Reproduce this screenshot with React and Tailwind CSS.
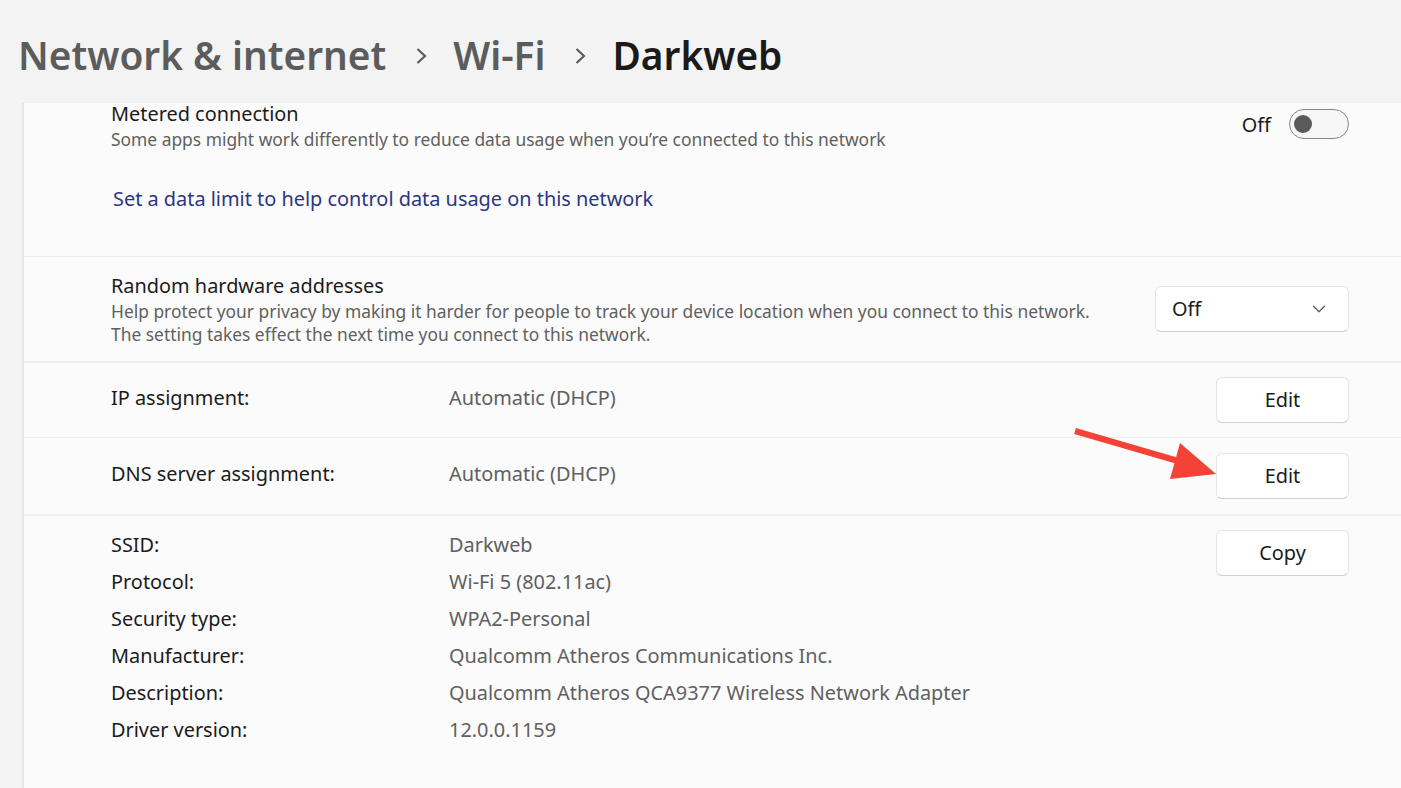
import { ChevronDown } from 'lucide-react';

const details = [
  ['SSID:', 'Darkweb'],
  ['Protocol:', 'Wi-Fi 5 (802.11ac)'],
  ['Security type:', 'WPA2-Personal'],
  ['Manufacturer:', 'Qualcomm Atheros Communications Inc.'],
  ['Description:', 'Qualcomm Atheros QCA9377 Wireless Network Adapter'],
  ['Driver version:', '12.0.0.1159'],
];

function Btn({ children }) {
  return (
    <button className="w-[133px] h-[46px] rounded-[6px] bg-white border border-[#e5e5e5] border-b-[#cfcfcf] text-[19.9px] text-[#1b1b1b] flex items-center justify-center">
      {children}
    </button>
  );
}

function Crumb() {
  return (
    <svg className="ml-[30px] mr-[24px] mt-[2px]" width="13" height="18" viewBox="0 0 13 18">
      <path d="M1.5 2 L9 9 L1.5 16" fill="none" stroke="#5c5c5c" strokeWidth="2.2" />
    </svg>
  );
}

export default function App() {
  return (
    <div className="relative w-[1401px] h-[788px] overflow-hidden bg-[#f3f3f3] font-['Noto_Sans',sans-serif]">
      <header className="h-[103px] pl-[18px] flex items-center pt-[8px]">
        <h1 className="text-[38.8px] font-semibold leading-none text-[#5c5c5c] flex items-center">
          <span>Network &amp; internet</span>
          <Crumb />
          <span>Wi-Fi</span>
          <Crumb />
          <span className="text-[#1a1a1a]">Darkweb</span>
        </h1>
      </header>

      <main className="ml-[22px] border-l-2 border-[#e5e5e5] bg-[#fbfbfb] h-[685px]">
        {/* metered connection */}
        <section className="h-[153px] pl-[87px] pr-[52px] flex justify-between">
          <div>
            <p className="text-[19.9px] leading-[22px] text-[#1b1b1b]">Metered connection</p>
            <p className="mt-[3px] text-[17.4px] leading-[22px] text-[#606060]">
              Some apps might work differently to reduce data usage when you’re connected to this network
            </p>
            <a className="block mt-[36px] ml-[2px] text-[19.9px] leading-[26px] text-[#2c3682]">
              Set a data limit to help control data usage on this network
            </a>
          </div>
          <div className="pt-[6px] flex items-start gap-[18px]">
            <span className="text-[19.9px] leading-[32px] text-[#1b1b1b]">Off</span>
            <div className="w-[60px] h-[30px] rounded-full border-[1.5px] border-[#878787] bg-[#f6f6f6] flex items-center pl-[4px]">
              <div className="w-[18px] h-[18px] rounded-full bg-[#5a5a5a]" />
            </div>
          </div>
        </section>
        <div className="h-px bg-[#ececec]" />

        {/* random hardware addresses */}
        <section className="h-[104px] pl-[87px] pr-[52px] flex items-center justify-between">
          <div className="pt-[2px]">
            <p className="text-[19.9px] leading-[22px] text-[#1b1b1b]">Random hardware addresses</p>
            <p className="mt-[3px] text-[17.4px] leading-[23px] text-[#606060]">
              Help protect your privacy by making it harder for people to track your device location when you connect to this network.
              <br />
              The setting takes effect the next time you connect to this network.
            </p>
          </div>
          <div className="w-[194px] h-[46px] rounded-[6px] bg-white border border-[#e5e5e5] border-b-[#cfcfcf] flex items-center justify-between pl-[16px] pr-[18px]">
            <span className="text-[19.9px] text-[#1b1b1b]">Off</span>
            <ChevronDown className="w-[22px] h-[22px] text-[#5a5a5a]" strokeWidth={1.3} />
          </div>
        </section>
        <div className="h-[2px] bg-[#efefef]" />

        {/* ip */}
        <section className="h-[74px] pl-[87px] pr-[52px] flex items-center">
          <span className="w-[338px] text-[19.9px] text-[#1b1b1b] -mt-[4px]">IP assignment:</span>
          <span className="flex-1 text-[19.9px] text-[#606060] -mt-[4px]">Automatic (DHCP)</span>
          <Btn>Edit</Btn>
        </section>
        <div className="h-px bg-[#ececec]" />

        {/* dns */}
        <section className="h-[76px] pl-[87px] pr-[52px] flex items-center">
          <span className="w-[338px] text-[19.9px] text-[#1b1b1b] -mt-[4px]">DNS server assignment:</span>
          <span className="flex-1 text-[19.9px] text-[#606060] -mt-[4px]">Automatic (DHCP)</span>
          <Btn>Edit</Btn>
        </section>
        <div className="h-[2px] bg-[#efefef]" />

        {/* details */}
        <section className="pl-[87px] pr-[52px] pt-[14px] flex items-start">
          <div className="flex-1 -mt-[4px] grid grid-cols-[338px_1fr]">
            {details.map(([k, v]) => (
              <div key={k} className="contents">
                <span className="text-[19.9px] leading-[37px] text-[#1b1b1b]">{k}</span>
                <span className="text-[19.9px] leading-[37px] text-[#606060]">{v}</span>
              </div>
            ))}
          </div>
          <Btn>Copy</Btn>
        </section>
      </main>

      {/* annotation arrow */}
      <svg className="absolute left-0 top-0 pointer-events-none" width="1401" height="788">
        <line x1="1075" y1="431" x2="1185" y2="463" stroke="#f44336" strokeWidth="6" />
        <polygon points="1216,474 1180,443 1170,479" fill="#f44336" />
      </svg>
    </div>
  );
}
